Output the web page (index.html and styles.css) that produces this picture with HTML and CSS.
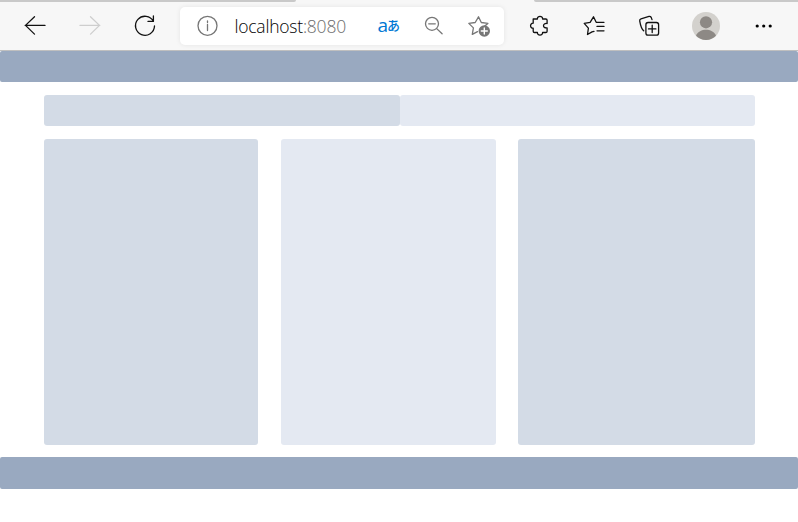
FILE: index.html
```
<!DOCTYPE html>
<html lang="en">
<head>
<meta charset="utf-8">
<title>localhost:8080</title>
<link rel="stylesheet" href="styles.css">
</head>
<body>
<div class="tabs"><div class="tab-left"></div><div class="tab-right"></div></div>
<nav class="toolbar">
  <svg class="icon back" viewBox="0 0 24 24"><path d="M2.2 11.4H22M11.5 2.8l-9 8.6 9 8.7"/></svg>
  <svg class="icon forward" viewBox="0 0 24 24"><path d="M2 11.4h19.8M12.5 2.8l9 8.6-9 8.7"/></svg>
  <svg class="icon reload" viewBox="0 0 24 24"><path d="M20.4 7.3A9.5 9.5 0 1 0 21.5 12M20.4 2v5.4H15"/></svg>
  <div class="address">
    <svg class="icon info" viewBox="0 0 24 24"><circle cx="12.5" cy="11.8" r="9.5"/><path d="M12.5 10.5v6M12.5 7v1.5"/></svg>
    <span class="url">localhost<span class="port">:8080</span></span>
    <span class="translate"><span class="latin">a</span><span class="kana">あ</span></span>
    <svg class="icon zoom" viewBox="0 0 24 24"><circle cx="10" cy="9.8" r="6.5"/><path d="M6.7 9.8h6.6M14.7 14.6l5.4 5.2"/></svg>
    <svg class="icon star" viewBox="0 0 24 24"><path d="M10.5 17.6l-5.2 2.8 1.1-6.5L1.8 9.4l6.4-.9L11.5 2.8l2.8 5.7 6.6.9-3.2 2.6"/><circle class="badge" cx="17.3" cy="17" r="5.7"/><path class="plus" d="M17.3 14v6M14.3 17h6"/></svg>
  </div>
  <svg class="icon puzzle" viewBox="0 0 24 24"><path d="M5.2 5h4.2C9.2 1.5 14.8 1.5 14.6 5h3.2q1.3 0 1.3 1.3v3.2c-4.8-.8-4.8 5.1 0 4.3v3.4q0 1.3-1.3 1.3h-3.2c.2 3.4-5.4 3.4-5.2 0H6.5q-1.3 0-1.3-1.3v-3c-3.5.1-3.5-5.1 0-5z"/></svg>
  <svg class="icon favorites" viewBox="0 0 24 24"><path d="M12 17.4l-2 .5-4.5 2.6.9-6.4L2.2 9.4l5.9-1.1L11.5 2.8l2.7 5.5H22M15 12.4h7M15 16.8h7"/></svg>
  <svg class="icon collections" viewBox="0 0 24 24"><rect x="8.9" y="8.5" width="12.7" height="12.7" rx="2.2"/><path d="M15.2 11.2v7.4M11.5 14.9h7.4M6.7 16.8C4.3 14.8 3.4 10.9 2.7 6.8q-.2-1.5 1.3-2L12 2.4q1.5-.3 2.2 1l.8 2.2"/></svg>
  <svg class="avatar" viewBox="0 0 28 28"><circle cx="14" cy="14" r="14" fill="#d3d1cd"/><circle cx="14" cy="10.3" r="6.1" fill="#8d8985"/><path d="M4 23.8c1.6-4.2 6-6 10-6s8.4 1.8 10 6A14 14 0 0 1 4 23.8" fill="#8d8985"/></svg>
  <svg class="icon more" viewBox="0 0 24 24"><circle cx="5.2" cy="12" r="1.6"/><circle cx="11.7" cy="12" r="1.6"/><circle cx="18.2" cy="12" r="1.6"/></svg>
</nav>
<header class="band"></header>
<main class="content">
  <div class="row"><div class="block dark"></div><div class="block light"></div></div>
  <div class="columns"><div class="block dark"></div><div class="block light"></div><div class="block dark"></div></div>
</main>
<footer class="band footer"></footer>
</body>
</html>
```
FILE: styles.css
```
* { box-sizing: border-box; }
body { margin: 0; background: #fff; font-family: "Open Sans", "Noto Sans CJK JP", sans-serif; overflow: hidden; }
.tabs { height: 2px; display: flex; justify-content: space-between; background: #f7f7f7; }
.tab-left, .tab-right { background: #c9c9c9; }
.tab-left { width: 296px; border-bottom-right-radius: 4px; }
.tab-right { width: 264px; border-bottom-left-radius: 4px; }
.toolbar { height: 49px; display: flex; align-items: flex-start; padding: 12px 0 0 23px; background: #f7f7f7; border-bottom: 1px solid #bfbfbf; }
.icon { width: 24px; height: 24px; flex: none; fill: none; stroke: #111; stroke-width: 1.3; stroke-linejoin: round; stroke-linecap: round; }
.forward { margin-left: 31px; stroke: #cecece; }
.reload { margin-left: 31px; }
.address { width: 324px; height: 38px; margin: -7px 0 0 23px; padding: 7px 0 0 15px; display: flex; align-items: flex-start; background: #fff; border-radius: 5px; box-shadow: 0 0 5px rgba(0, 0, 0, .08); }
.address .icon { stroke: #767676; stroke-width: 1.3; }
.url { width: 143px; margin-left: 15.5px; font-size: 17.5px; line-height: 24px; font-weight: 360; color: #000; letter-spacing: -.22px; white-space: nowrap; }
.port { color: #6e6e6e; }
.translate { width: 26px; display: flex; align-items: baseline; color: #0078d4; line-height: 22px; }
.latin { font-size: 19px; }
.kana { position: relative; top: -2px; font-family: "Noto Sans CJK JP", sans-serif; font-size: 13px; font-weight: 500; margin-left: -1px; }
.zoom { margin-left: 18px; }
.star { margin-left: 21px; }
.star .badge { fill: #767676; stroke: none; }
.star .plus { stroke: #fff; stroke-width: 1.4; }
.puzzle { margin-left: 24px; }
.favorites { margin-left: 30px; }
.collections { margin-left: 31px; }
.avatar { width: 28px; height: 28px; flex: none; margin: -2px 0 0 31px; }
.more { margin-left: 32px; fill: #000; stroke: none; }
.band { height: 31px; background: #99a9c0; border-radius: 2px; }
.content { padding: 13px 43px 12px 44px; }
.row { display: grid; grid-template-columns: 356px 355px; height: 31px; margin-bottom: 13px; }
.columns { display: grid; grid-template-columns: 214px 215px 237px; column-gap: 22.5px; height: 306px; }
.block { border-radius: 3px; }
.dark { background: #d3dbe6; }
.light { background: #e4e9f2; }
.footer { height: 32px; }
```
